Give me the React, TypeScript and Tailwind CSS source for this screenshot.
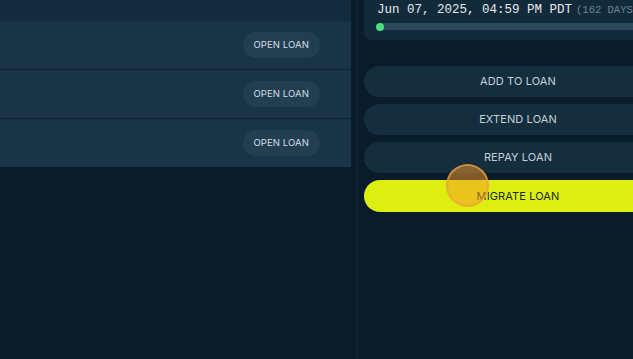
import React from 'react';

const rows = [1, 2, 3];
const actions = ['ADD TO LOAN', 'EXTEND LOAN', 'REPAY LOAN'];

const App: React.FC = () => {
  return (
    <div className="relative w-[633px] h-[359px] overflow-hidden bg-[#0a1b29] flex font-['Inter',sans-serif]">
      {/* Left: loans list */}
      <div className="w-[358px] shrink-0 h-full border-r border-[#11283a]">
        <div className="w-[351px] bg-[#132b3c]">
          <div className="h-[21px]" />
          <div className="flex flex-col bg-[#0e2231] gap-px">
            {rows.map((r) => (
              <div key={r} className="h-[48px] bg-[#183446] flex items-center justify-end pr-[31px]">
                <button className="h-[26px] px-[11px] rounded-full bg-[#223f51] text-[9.5px] leading-none text-[#d3dde5] tracking-[0.01em]">
                  OPEN LOAN
                </button>
              </div>
            ))}
          </div>
        </div>
      </div>

      {/* Right: loan details + actions */}
      <div className="shrink-0 w-[314px] pl-[6px] flex flex-col">
        <div className="bg-[#132a3b] rounded-b-lg h-[40px] pl-[13px] pr-2 pt-[1px] flex flex-col">
          <div className="flex items-baseline whitespace-nowrap font-['Liberation_Mono',monospace]">
            <span className="text-[12.5px] text-[#e3e9ee] leading-[18px]">Jun 07, 2025, 04:59 PM PDT</span>
            <span className="ml-[4px] text-[10.5px] text-[#6a8496]">(162 DAYS</span>
          </div>
          <div className="relative mt-[4px] h-[7px] rounded-full bg-[#29495c]">
            <div className="absolute -left-[1px] -top-[0.5px] w-[8px] h-[8px] rounded-full bg-[#4ade80]" />
          </div>
        </div>

        <div className="mt-[26px] flex flex-col gap-[7px]">
          {actions.map((a) => (
            <button key={a} className="h-[31px] rounded-full bg-[#142e3e] text-[11px] text-[#c3d1db] tracking-[0.01em]">
              {a}
            </button>
          ))}
          <button className="h-[32px] rounded-full bg-[#dcef10] text-[11px] text-[#1a2a1a] tracking-[0.01em]">
            MIGRATE LOAN
          </button>
        </div>
      </div>

      {/* cursor highlight */}
      <div className="absolute left-[446px] top-[164px] w-[43px] h-[43px] rounded-full bg-[#f59a2a]/50 border-2 border-[#f0a040]/70" />
    </div>
  );
};

export default App;
